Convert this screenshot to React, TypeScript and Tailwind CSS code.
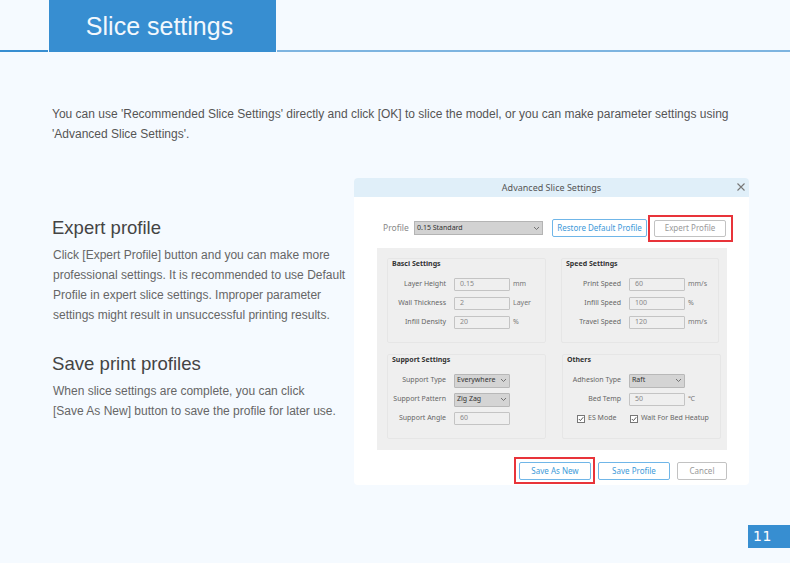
const sans = "font-['Liberation_Sans',Arial,sans-serif]";
const ui = "font-['Noto_Sans',sans-serif]";

function Chevron() {
  return (
    <svg width="7" height="5" viewBox="0 0 7 5" className="shrink-0" fill="none" stroke="#666" strokeWidth="0.9">
      <path d="M1 1 L3.5 3.5 L6 1" />
    </svg>
  );
}

function Check() {
  return (
    <span className="w-[8px] h-[8px] border border-[#777] bg-white flex items-center justify-center shrink-0">
      <svg width="6" height="6" viewBox="0 0 6 6" fill="none" stroke="#444" strokeWidth="0.9">
        <path d="M0.8 3 L2.4 4.6 L5.3 1.2" />
      </svg>
    </span>
  );
}

function Row({ label, children }: { label: string; children: React.ReactNode }) {
  return (
    <div className="flex items-center h-[13px]">
      <span className="w-[58px] text-right text-[#666] shrink-0 whitespace-nowrap">{label}</span>
      {children}
    </div>
  );
}

function Field({ value, unit }: { value: string; unit?: string }) {
  return (
    <>
      <span className="w-[56px] h-[13px] ml-[8px] border border-[#c4c4c4] rounded-[1px] bg-[#efefef] text-[#888] pl-[5px] leading-[10px] shrink-0">
        {value}
      </span>
      {unit && <span className="ml-[3px] text-[#777]">{unit}</span>}
    </>
  );
}

function Select({ value }: { value: string }) {
  return (
    <span className="w-[56px] h-[14px] ml-[8px] border border-[#b8b8b8] rounded-[1px] bg-[#d4d4d4] text-[#333] px-[2px] flex items-center justify-between shrink-0">
      {value}
      <Chevron />
    </span>
  );
}

function Group({ title, className, bodyClass = "", children }: { title: string; className: string; bodyClass?: string; children: React.ReactNode }) {
  return (
    <section className={`border border-[#e6e6e6] rounded-[2px] ${className}`}>
      <h4 className="font-bold text-[#333] text-[7px] leading-[10px] pl-[4px] h-[19px]">{title}</h4>
      <div className={`flex flex-col gap-[6px] ${bodyClass}`}>{children}</div>
    </section>
  );
}

export default function App() {
  return (
    <div className={`w-[790px] h-[563px] bg-[#f5faff] overflow-hidden flex flex-col ${sans}`}>
      <header className="flex items-end h-[52px] shrink-0">
        <div className="w-[48px] h-[2px] bg-[#378ed1]" />
        <div className="ml-[1px] w-[227px] h-[52px] bg-[#378ed1] text-[#f2f8fd] text-[25px] leading-[52px] text-center pr-[6px]">
          Slice settings
        </div>
        <div className="ml-[1px] flex-1 h-[2px] bg-[#7db4e0]" />
      </header>

      <p className="ml-[52px] mt-[52px] w-[690px] text-[12px] leading-[20px] text-[#555]">
        You can use 'Recommended Slice Settings' directly and click [OK] to slice the model, or you can make parameter settings using
        <br />
        'Advanced Slice Settings'.
      </p>

      <div className="flex mt-[34px]">
        <div className="w-[302px] ml-[52px] shrink-0 pt-[38px]">
          <h2 className="text-[18.5px] leading-[24px] text-[#444]">Expert profile</h2>
          <p className="mt-[5px] ml-[1px] text-[12px] leading-[20px] text-[#666] whitespace-nowrap">
            Click [Expert Profile] button and you can make more
            <br />
            professional settings. It is recommended to use Default
            <br />
            Profile in expert slice settings. Improper parameter
            <br />
            settings might result in unsuccessful printing results.
          </p>
          <h2 className="mt-[27px] text-[18.6px] leading-[24px] text-[#444]">Save print profiles</h2>
          <p className="mt-[5px] ml-[1px] text-[12px] leading-[20px] text-[#666] whitespace-nowrap">
            When slice settings are complete, you can click
            <br />
            [Save As New] button to save the profile for later use.
          </p>
        </div>

        <div className={`w-[395px] h-[307px] bg-white rounded-[4px] overflow-hidden flex flex-col text-[7px] ${ui}`}>
          <div className="h-[19px] bg-[#e0eff9] flex items-center justify-center relative shrink-0 text-[9px] text-[#555]">
            Advanced Slice Settings
            <svg className="absolute right-[3px] top-[4px]" width="10" height="10" viewBox="0 0 10 10" stroke="#777" strokeWidth="1.1">
              <path d="M1.5 1.5 L8.5 8.5 M8.5 1.5 L1.5 8.5" />
            </svg>
          </div>

          <div className="flex items-center h-[18px] mt-[22px] pl-[29px] shrink-0">
            <span className="w-[31px] text-[8.5px] text-[#888]">Profile</span>
            <span className="w-[129px] h-[14px] border border-[#b4b4b4] bg-[#d2d2d2] text-[#333] px-[2px] flex items-center justify-between">
              0.15 Standard
              <Chevron />
            </span>
            <span className="ml-[9px] w-[95px] h-[18px] border border-[#70b6e8] rounded-[2px] text-[#3d9ad9] text-[8px] flex items-center justify-center">
              Restore Default Profile
            </span>
            <span className="relative ml-[7px] w-[72px] h-[17px] border border-[#c2c2c2] rounded-[2px] text-[#999] text-[8px] flex items-center justify-center">
              Expert Profile
              <span className="absolute -left-[7px] -right-[8px] -top-[6px] -bottom-[6px] border-2 border-[#e8343a]" />
            </span>
          </div>

          <div className="mt-[11px] ml-[23px] w-[350px] h-[202px] bg-[#efefef] pl-[10px] pt-[10px] shrink-0 grid grid-cols-[159px_158px] grid-rows-[85px_85px] gap-x-[16px] gap-y-[11px]">
            <Group title="Basci Settings" className="w-[159px]">
              <Row label="Layer Height"><Field value="0.15" unit="mm" /></Row>
              <Row label="Wall Thickness"><Field value="2" unit="Layer" /></Row>
              <Row label="Infill Density"><Field value="20" unit="%" /></Row>
            </Group>
            <Group title="Speed Settings" className="w-[158px] -ml-[1px]" bodyClass="pl-[1px]">
              <Row label="Print Speed"><Field value="60" unit="mm/s" /></Row>
              <Row label="Infill Speed"><Field value="100" unit="%" /></Row>
              <Row label="Travel Speed"><Field value="120" unit="mm/s" /></Row>
            </Group>
            <Group title="Support Settings" className="w-[159px]">
              <Row label="Support Type"><Select value="Everywhere" /></Row>
              <Row label="Support Pattern"><Select value="Zig Zag" /></Row>
              <Row label="Support Angle"><Field value="60" /></Row>
            </Group>
            <Group title="Others" className="w-[159px]">
              <Row label="Adhesion Type"><Select value="Raft" /></Row>
              <Row label="Bed Temp"><Field value="50" unit="℃" /></Row>
              <div className="flex items-center h-[13px] text-[#666]">
                <span className="ml-[14px] w-[53px] flex items-center gap-[3px]"><Check />ES Mode</span>
                <span className="flex items-center gap-[3px] whitespace-nowrap"><Check />Wait For Bed Heatup</span>
              </div>
            </Group>
          </div>

          <div className="flex items-center h-[18px] mt-[12px] pl-[165px] text-[8px] shrink-0">
            <span className="relative w-[72px] h-[18px] border border-[#70b6e8] rounded-[2px] text-[#3d9ad9] flex items-center justify-center">
              Save As New
              <span className="absolute -left-[6px] -right-[5px] -top-[6px] -bottom-[5px] border-2 border-[#e8343a]" />
            </span>
            <span className="ml-[7px] w-[72px] h-[18px] border border-[#70b6e8] rounded-[2px] text-[#3d9ad9] flex items-center justify-center">
              Save Profile
            </span>
            <span className="ml-[7px] w-[50px] h-[18px] border border-[#c2c2c2] rounded-[2px] text-[#999] flex items-center justify-center">
              Cancel
            </span>
          </div>
        </div>
      </div>

      <div className="mt-[40px] flex justify-end">
        <div className="w-[42px] h-[23px] bg-[#378ed1] text-white font-['DejaVu_Sans',sans-serif] text-[14px] leading-[23px] pl-[5px] tracking-[0.5px]">
          11
        </div>
      </div>
    </div>
  );
}
